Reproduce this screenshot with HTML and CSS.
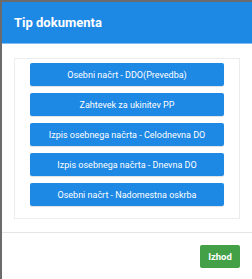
FILE: index.html
```html
<!DOCTYPE html>
<html>
<head>
<meta charset="utf-8">
<link rel="stylesheet" href="styles.css">
</head>
<body>
<div class="modal">
  <div class="modal-header">
    <h4 class="modal-title">Tip dokumenta</h4>
  </div>
  <div class="modal-body">
    <div class="panel">
      <button class="btn btn-doc">Osebni načrt - DDO(Prevedba)</button>
      <button class="btn btn-doc">Zahtevek za ukinitev PP</button>
      <button class="btn btn-doc">Izpis osebnega načrta - Celodnevna DO</button>
      <button class="btn btn-doc">Izpis osebnega načrta - Dnevna DO</button>
      <button class="btn btn-doc">Osebni načrt - Nadomestna oskrba</button>
    </div>
  </div>
  <div class="modal-footer">
    <button class="btn btn-exit">Izhod</button>
  </div>
</div>
</body>
</html>
```
FILE: styles.css
```css
html, body {
  margin: 0;
  padding: 0;
}
body {
  background: #6b6b6b;
  font-family: Roboto, "Liberation Sans", Arial, sans-serif;
  padding: 2px 0 0 2px;
  height: 279px;
  box-sizing: border-box;
  overflow: hidden;
}
.modal {
  background: #ffffff;
  width: 250px;
  height: 277px;
}
.modal-header {
  background: #1e88e5;
  height: 41px;
  border-bottom: 1px solid #7fbdf2;
  display: flex;
  align-items: center;
  padding-left: 12px;
}
.modal-title {
  margin: 0;
  color: #ffffff;
  font-size: 13px;
  font-weight: 700;
}
.modal-body {
  padding: 14px 12px 13px 12px;
  border-bottom: 1px solid #e5e5e5;
}
.panel {
  border: 1px solid #ececec;
  padding: 4px 15px 12px 15px;
  display: flex;
  flex-direction: column;
  gap: 7px;
}
.btn {
  border: none;
  font-family: Roboto, "Liberation Sans", Arial, sans-serif;
  color: #ffffff;
  border-radius: 2px;
  padding: 0;
  cursor: pointer;
}
.btn-doc {
  background: #1e88e5;
  height: 23px;
  font-size: 9px;
  box-shadow: 0 1px 1px rgba(0,0,0,0.12);
}
.modal-footer {
  display: flex;
  justify-content: flex-end;
  padding: 12px 12px 0 0;
}
.btn-exit {
  background: #43a047;
  width: 40px;
  height: 23px;
  font-size: 9.5px;
  font-weight: 700;
}
```
